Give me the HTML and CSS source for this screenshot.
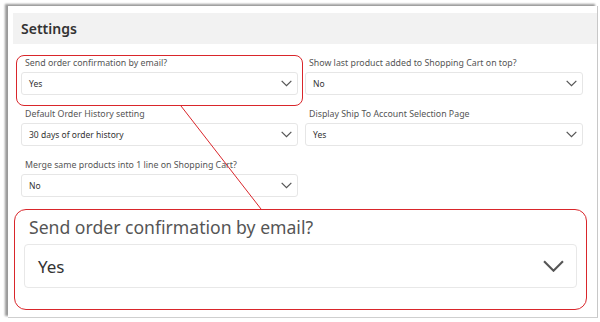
FILE: index.html
```html
<!DOCTYPE html>
<html lang="en">
<head>
    <meta charset="UTF-8">
    <meta name="viewport" content="width=device-width, initial-scale=1.0">
    <title>Settings</title>
    <link rel="stylesheet" href="styles.css">
</head>
<body>
    <div class="panel">
        <div class="panel-header">Settings</div>

        <div class="settings-grid">
            <div class="field">
                <div class="field-label">Send order confirmation by email?</div>
                <div class="dropdown">
                    <span>Yes</span>
                    <svg class="chevron" viewBox="0 0 10 6"><path d="M0.6 0.6 L5 5 L9.4 0.6"/></svg>
                </div>
            </div>
            <div class="field">
                <div class="field-label">Show last product added to Shopping Cart on top?</div>
                <div class="dropdown">
                    <span>No</span>
                    <svg class="chevron" viewBox="0 0 10 6"><path d="M0.6 0.6 L5 5 L9.4 0.6"/></svg>
                </div>
            </div>
            <div class="field">
                <div class="field-label">Default Order History setting</div>
                <div class="dropdown">
                    <span>30 days of order history</span>
                    <svg class="chevron" viewBox="0 0 10 6"><path d="M0.6 0.6 L5 5 L9.4 0.6"/></svg>
                </div>
            </div>
            <div class="field">
                <div class="field-label">Display Ship To Account Selection Page</div>
                <div class="dropdown">
                    <span>Yes</span>
                    <svg class="chevron" viewBox="0 0 10 6"><path d="M0.6 0.6 L5 5 L9.4 0.6"/></svg>
                </div>
            </div>
            <div class="field">
                <div class="field-label">Merge same products into 1 line on Shopping Cart?</div>
                <div class="dropdown">
                    <span>No</span>
                    <svg class="chevron" viewBox="0 0 10 6"><path d="M0.6 0.6 L5 5 L9.4 0.6"/></svg>
                </div>
            </div>
        </div>

        <!-- zoomed copy of the highlighted field -->
        <div class="callout">
            <div class="callout-label">Send order confirmation by email?</div>
            <div class="callout-dropdown">
                <span>Yes</span>
                <svg class="callout-chevron" viewBox="0 0 20 11"><path d="M1 1 L10 10 L19 1"/></svg>
            </div>
        </div>
    </div>

    <div class="highlight"></div>
    <svg class="connector" width="600" height="322"><line x1="181" y1="106" x2="261" y2="209"/></svg>
</body>
</html>
```

FILE: styles.css
```css
body {
    margin: 0;
    background-color: white;
    font-family: 'Noto Sans', 'Open Sans', sans-serif;
    color: #333;
}
.panel {
    position: relative;
    margin: 6px 0 0 8px;
    width: 590px;
    height: 312px;
    padding: 7px 0 0 5px;
    box-sizing: border-box;
    background-color: white;
    border-right: 1px solid #c8c8c8;
    border-bottom: 1px solid #cfcfcf;
    box-shadow: -3px -2px 2px #9a9a9a;
}
.panel-header {
    height: 31px;
    line-height: 31px;
    padding-left: 8px;
    background-color: #f2f2f2;
    font-size: 14px;
    font-weight: 600;
    color: #333;
}
.settings-grid {
    display: grid;
    grid-template-columns: 277px 278px;
    column-gap: 7px;
    row-gap: 13px;
    margin: 13px 0 0 8px;
}
.field-label {
    font-size: 8.8px;
    line-height: 12px;
    padding-left: 4px;
    color: #555;
    white-space: nowrap;
}
.dropdown {
    display: flex;
    align-items: center;
    justify-content: space-between;
    height: 23px;
    margin-top: 3px;
    padding: 0 5px 0 7px;
    box-sizing: border-box;
    border: 1px solid #e6e6e6;
    border-radius: 3px;
    font-size: 8.5px;
    color: #333;
}
.chevron {
    width: 11px;
    height: 7px;
    fill: none;
    stroke: #555;
    stroke-width: 1.1;
}
.callout {
    margin: 12px 10px 0 1px;
    height: 101px;
    padding: 6px 9px 0 9px;
    box-sizing: border-box;
    border: 1.5px solid #d9262b;
    border-radius: 12px;
}
.callout-label {
    font-size: 17.6px;
    line-height: 22px;
    padding-left: 5px;
    color: #555;
}
.callout-dropdown {
    display: flex;
    align-items: center;
    justify-content: space-between;
    height: 44px;
    margin-top: 6px;
    padding: 0 12px 0 13px;
    box-sizing: border-box;
    border: 1.5px solid #e8e8e8;
    border-radius: 4px;
    font-size: 17px;
    color: #333;
}
.callout-chevron {
    width: 21px;
    height: 12px;
    fill: none;
    stroke: #555;
    stroke-width: 2;
}
.highlight {
    position: absolute;
    left: 16px;
    top: 55px;
    width: 287px;
    height: 51px;
    box-sizing: border-box;
    border: 1.5px solid #d9262b;
    border-radius: 8px;
}
.connector {
    position: absolute;
    left: 0;
    top: 0;
    pointer-events: none;
}
.connector line {
    stroke: #d9262b;
    stroke-width: 1;
}
```
